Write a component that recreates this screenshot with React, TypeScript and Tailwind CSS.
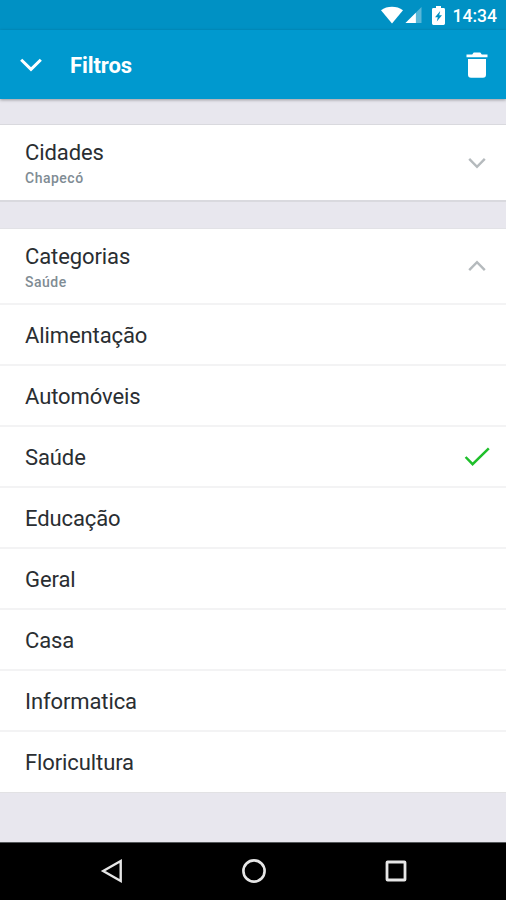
import React, { useState } from "react";

const categories = [
  "Alimentação",
  "Automóveis",
  "Saúde",
  "Educação",
  "Geral",
  "Casa",
  "Informatica",
  "Floricultura",
];

const StatusBar: React.FC = () => (
  <div className="flex h-[30px] items-center justify-end bg-[#0091c4] pr-[9px] text-white">
    <svg className="mr-[2px]" width="22" height="18" viewBox="0 0 22 18" fill="currentColor">
      <path d="M0 4.2C6.2-.4 15.8-.4 22 4.2L11 17.6Z" />
    </svg>
    <svg className="mr-[10px]" width="17" height="18" viewBox="0 0 18 18" fill="currentColor">
      <path d="M17.5.5V17.5H.5Z" opacity="0.35" />
      <path d="M11.5 6.5V17.5H.5Z" />
    </svg>
    <svg className="mr-[8px]" width="13" height="19" viewBox="0 0 13 19">
      <path
        d="M4 0h5v2h2.6Q13 2 13 3.4v14.2Q13 19 11.6 19H1.4Q0 19 0 17.6V3.4Q0 2 1.4 2H4Z"
        fill="currentColor"
      />
      <path d="M8.2 5 3 11.2h2.8L4.8 15.4 10 9.2H7.2Z" fill="#0091c4" />
    </svg>
    <span className="pt-[2px] text-[17.5px] leading-[28px] font-medium">14:34</span>
  </div>
);

const Header: React.FC = () => (
  <div className="relative flex h-[69px] items-center bg-[#0099cf] pr-[18px] pl-5 text-white shadow-[0_1px_3px_rgba(0,0,0,0.35)]">
    <svg width="22" height="14" viewBox="0 0 22 14" fill="none" stroke="currentColor" strokeWidth="3">
      <path d="M1.2 1.8 11 11.4 20.8 1.8" />
    </svg>
    <h1 className="ml-[28px] flex-1 pt-[2px] text-[22px] leading-[30px] font-bold tracking-[-0.1px]">Filtros</h1>
    <svg width="22" height="26" viewBox="0 0 22 26" fill="currentColor">
      <path d="M.5 2.4h5.7L7.7.4h6.6l1.5 2h5.7v2.8H.5Z" />
      <path d="M2 7h18v15.8q0 3-3 3H5q-3 0-3-3Z" />
    </svg>
  </div>
);

const SectionHeader: React.FC<{
  title: string;
  value: string;
  open: boolean;
  onClick?: () => void;
}> = ({ title, value, open, onClick }) => (
  <button
    className="flex h-full w-full items-center justify-between pr-[20px] pl-[25px] text-left"
    onClick={onClick}
  >
    <div className="pt-1">
      <div className="text-[22px] leading-[28px] tracking-[-0.1px] text-[#2a2e32]">{title}</div>
      <div className="text-[14px] leading-[23px] font-medium tracking-[0.5px] text-[#7f8c94]">{value}</div>
    </div>
    <svg width="18" height="12" viewBox="0 0 18 12" fill="none" stroke="#b5babd" strokeWidth="2.4">
      <path d={open ? "M1.2 10.2 9 2.2 16.8 10.2" : "M1.2 1.8 9 9.8 16.8 1.8"} />
    </svg>
  </button>
);

const NavBar: React.FC = () => (
  <div className="flex h-[58px] items-center justify-center gap-[117px] border-t border-[#55585a] bg-black pb-px pl-[2px]">
    <svg width="24" height="26" viewBox="0 0 24 26" fill="none" stroke="#e6e6e6" strokeWidth="2.4">
      <path d="M20.7 3V23L3.2 13Z" />
    </svg>
    <svg width="26" height="26" viewBox="0 0 26 26" fill="none" stroke="#e6e6e6" strokeWidth="2.6">
      <circle cx="13" cy="13" r="10.6" />
    </svg>
    <svg width="24" height="26" viewBox="0 0 24 26" fill="none" stroke="#e6e6e6" strokeWidth="2.8">
      <rect x="3" y="4" width="18" height="18" rx="0.6" />
    </svg>
  </div>
);

const App: React.FC = () => {
  const [selected, setSelected] = useState("Saúde");
  const [open, setOpen] = useState(true);

  return (
    <div className="flex h-[900px] w-[506px] flex-col overflow-hidden bg-[#e8e7ee] font-['Roboto',sans-serif]">
      <StatusBar />
      <Header />
      <main className="flex-1 pt-[25px]">
        <section className="mb-[26px] border-t border-b-2 border-[#d9d9de] bg-white">
          <div className="h-[75px]">
            <SectionHeader title="Cidades" value="Chapecó" open={false} />
          </div>
        </section>
        <section className="border-t border-b border-t-[#e2e2e6] border-b-[#e2e2e4] bg-white pb-px">
          <div className="h-[74px]">
            <SectionHeader
              title="Categorias"
              value={selected}
              open={open}
              onClick={() => setOpen(!open)}
            />
          </div>
          {open &&
            categories.map((name) => (
              <button
                key={name}
                className="flex h-[61px] w-full items-center justify-between border-t-2 border-[#f3f3f4] pt-px pr-[16px] pl-[25px]"
                onClick={() => setSelected(name)}
              >
                <span className="pt-px text-[22px] leading-[28px] tracking-[-0.1px] text-[#2a2e32]">{name}</span>
                {selected === name && (
                  <svg width="26" height="20" viewBox="0 0 26 20" fill="none" stroke="#1fbf2b" strokeWidth="2.5">
                    <path d="M1.6 10 8.6 17.2 24.8 1.4" />
                  </svg>
                )}
              </button>
            ))}
        </section>
      </main>
      <NavBar />
    </div>
  );
};

export default App;
